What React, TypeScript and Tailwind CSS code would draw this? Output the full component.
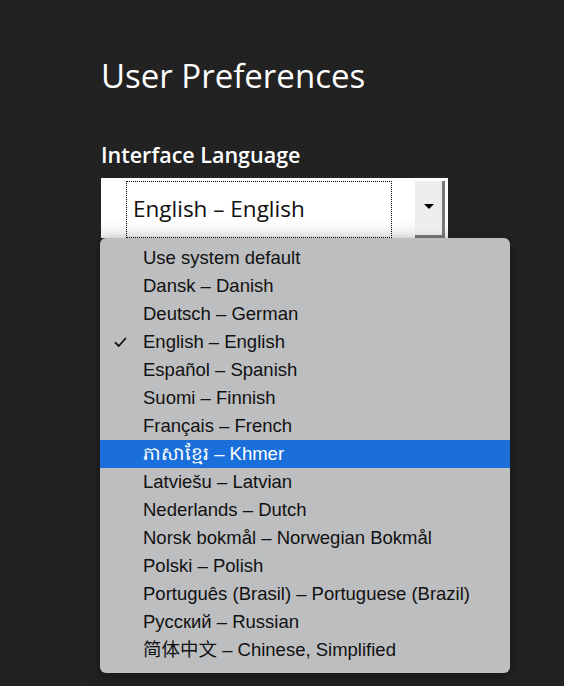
const languages = [
  'Use system default',
  'Dansk – Danish',
  'Deutsch – German',
  'English – English',
  'Español – Spanish',
  'Suomi – Finnish',
  'Français – French',
  'ភាសាខ្មែរ – Khmer',
  'Latviešu – Latvian',
  'Nederlands – Dutch',
  'Norsk bokmål – Norwegian Bokmål',
  'Polski – Polish',
  'Português (Brasil) – Portuguese (Brazil)',
  'Русский – Russian',
  '简体中文 – Chinese, Simplified',
];

const checked = 'English – English';
const highlighted = 'ភាសាខ្មែរ – Khmer';

const Check = () => (
  <svg width="13" height="11" viewBox="0 0 13 11" fill="none">
    <path d="M1.5 5.8 L4.8 9 L11.5 1.5" stroke="#111" strokeWidth="1.8" strokeLinecap="round" strokeLinejoin="round" />
  </svg>
);

const App = () => {
  return (
    <div className="h-[686px] w-[564px] overflow-hidden bg-[#222222] pl-[101px] pt-[52px] font-['Open_Sans','Noto_Sans',sans-serif] text-white">
      <h1 className="text-[33px] leading-[48px] font-normal">User Preferences</h1>
      <h2 className="mt-[38px] text-[21.5px] leading-[34px] font-semibold">Interface Language</h2>

      <div className="relative mt-[6px]">
        <div className="flex h-[60px] w-[347px] bg-gradient-to-b from-white from-70% to-[#eeeeee] pt-[3px]">
          <div className="ml-[25px] h-[57px] w-[266px] border border-dotted border-black pl-[6px] pt-[12px] text-[22.5px] leading-[30px] text-[#111]">
            English – English
          </div>
          <div className="ml-[23px] flex h-[57px] w-[30px] items-center justify-center border-b-[3px] border-r-[3px] border-[#777] bg-[#eeeeee]">
            <div className="ml-[1px] mt-[-4px] h-0 w-0 border-x-[5px] border-t-[5px] border-x-transparent border-t-black" />
          </div>
        </div>

        <div className="absolute left-[-1px] top-[60px] w-[410px] rounded-[6px] bg-[#bdbec0] pt-[6px] pb-[9px] shadow-[0_4px_14px_rgba(0,0,0,0.35)] font-['Liberation_Sans','Noto_Sans_CJK_SC',sans-serif] text-[18.5px] text-[#111]">
          {languages.map((lang) => (
            <div
              key={lang}
              className={`flex h-[28px] items-center ${lang === highlighted ? 'bg-[#1a6fdb] text-white' : ''}`}
            >
              <span className="flex w-[43px] justify-end pr-[16px]">{lang === checked ? <Check /> : null}</span>
              <span>{lang}</span>
            </div>
          ))}
        </div>
      </div>
    </div>
  );
};

export default App;
